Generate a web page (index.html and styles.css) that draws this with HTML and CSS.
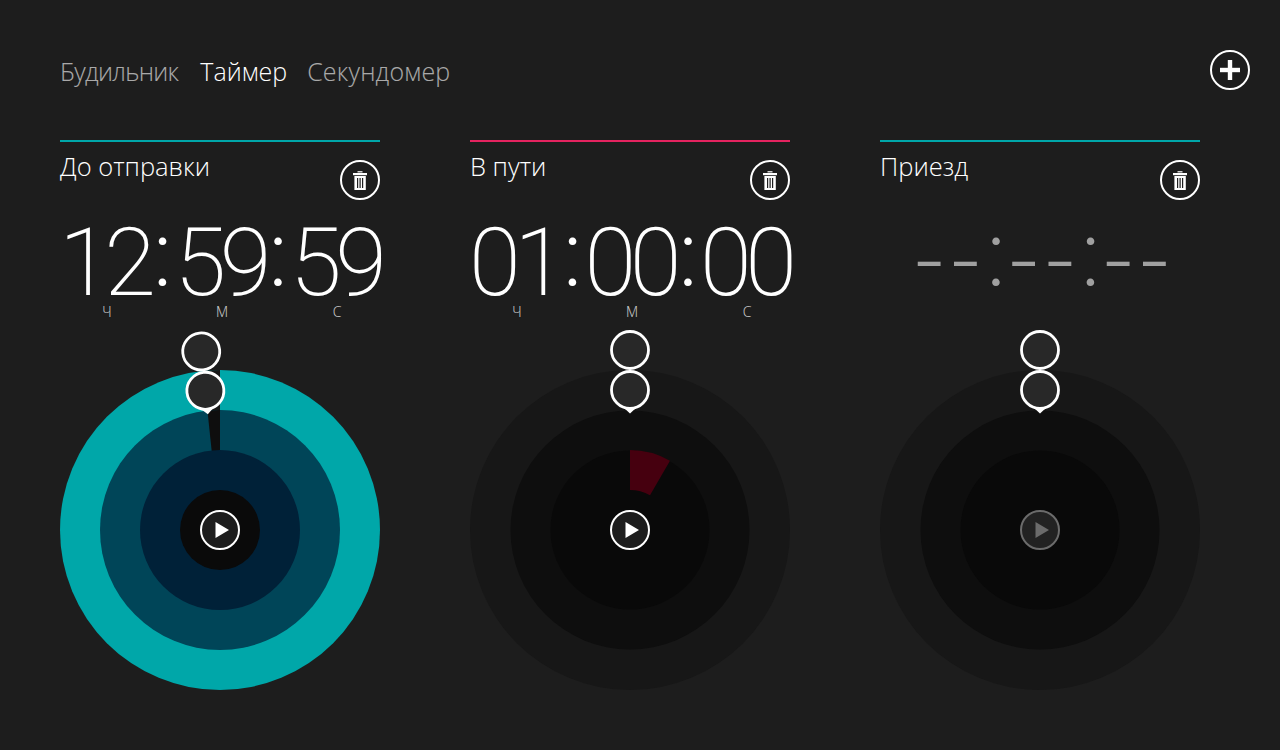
FILE: index.html
```html
<!DOCTYPE html>
<html lang="ru">
<head>
  <meta charset="UTF-8" />
  <title>Таймер</title>
  <link rel="stylesheet" href="styles.css">
</head>
<body>
  <div class="page">
    <header class="top">
      <nav class="tabs">
        <span>Будильник</span>
        <span class="active">Таймер</span>
        <span>Секундомер</span>
      </nav>
      <svg class="round-btn" viewBox="0 0 40 40">
        <circle cx="20" cy="20" r="19" fill="none" stroke="#fff" stroke-width="2"/>
        <rect x="10" y="17.8" width="20" height="4.4" fill="#fff"/>
        <rect x="17.8" y="10" width="4.4" height="20" fill="#fff"/>
      </svg>
    </header>

    <main class="timers">
      <section class="timer teal">
        <div class="head">
          <h2>До отправки</h2>
          <svg class="round-btn trash" viewBox="0 0 40 40">
            <circle cx="20" cy="20" r="19" fill="none" stroke="#fff" stroke-width="2"/>
            <rect x="17.5" y="11.2" width="5" height="1.2" fill="#fff"/>
            <rect x="13" y="13" width="14" height="2.2" fill="#fff"/>
            <path d="M14.4 16h11.4v14h-11.4z" fill="#fff"/>
            <path d="M17 18h1.2v10h-1.2zM19.5 18h1.2v10h-1.2zM22 18h1.2v10h-1.2z" fill="#1d1d1d"/>
          </svg>
        </div>
        <div class="time">12<i>:</i>59<i>:</i>59</div>
        <div class="units"><span>ч</span><span>м</span><span>с</span></div>
        <svg class="dial" viewBox="0 0 320 360">
          <circle cx="160" cy="200" r="160" fill="#00a7a9"/>
          <path d="M160 200L143.28 40.88A160 160 0 0 1 160 40Z" fill="#171717"/>
          <circle cx="160" cy="200" r="120" fill="#004558"/>
          <path d="M160 200L147.46 80.66A120 120 0 0 1 160 80Z" fill="#0e0e0e"/>
          <circle cx="160" cy="200" r="80" fill="#002138"/>
          <circle cx="160" cy="200" r="40" fill="#0a0a0a"/>
          <g transform="rotate(-6 160 200)">
            <circle class="knob" cx="160" cy="20.5" r="18.5"/>
            <path d="M153 77L160 83.5L167 77Z" fill="#fff"/>
            <circle class="knob" cx="160" cy="60" r="18.5"/>
          </g>
          <circle class="play-ring" cx="160" cy="200" r="19"/>
          <path class="play-arrow" d="M155.5 192L169 200L155.5 208Z"/>
        </svg>
      </section>

      <section class="timer pink">
        <div class="head">
          <h2>В пути</h2>
          <svg class="round-btn trash" viewBox="0 0 40 40">
            <circle cx="20" cy="20" r="19" fill="none" stroke="#fff" stroke-width="2"/>
            <rect x="17.5" y="11.2" width="5" height="1.2" fill="#fff"/>
            <rect x="13" y="13" width="14" height="2.2" fill="#fff"/>
            <path d="M14.4 16h11.4v14h-11.4z" fill="#fff"/>
            <path d="M17 18h1.2v10h-1.2zM19.5 18h1.2v10h-1.2zM22 18h1.2v10h-1.2z" fill="#1d1d1d"/>
          </svg>
        </div>
        <div class="time">01<i>:</i>00<i>:</i>00</div>
        <div class="units"><span>ч</span><span>м</span><span>с</span></div>
        <svg class="dial" viewBox="0 0 320 360">
          <circle cx="160" cy="200" r="160" fill="#171717"/>
          <circle cx="160" cy="200" r="119.5" fill="#0e0e0e"/>
          <circle cx="160" cy="200" r="79.5" fill="#090909"/>
          <path d="M160 120A80 80 0 0 1 200 130.72L180 165.36A40 40 0 0 0 160 160Z" fill="#46000f"/>
          <circle class="knob" cx="160" cy="20" r="18.5"/>
          <path d="M153 77L160 83.5L167 77Z" fill="#fff"/>
          <circle class="knob" cx="160" cy="60" r="18.5"/>
          <circle class="play-ring" cx="160" cy="200" r="19"/>
          <path class="play-arrow" d="M155.5 192L169 200L155.5 208Z"/>
        </svg>
      </section>

      <section class="timer teal">
        <div class="head">
          <h2>Приезд</h2>
          <svg class="round-btn trash" viewBox="0 0 40 40">
            <circle cx="20" cy="20" r="19" fill="none" stroke="#fff" stroke-width="2"/>
            <rect x="17.5" y="11.2" width="5" height="1.2" fill="#fff"/>
            <rect x="13" y="13" width="14" height="2.2" fill="#fff"/>
            <path d="M14.4 16h11.4v14h-11.4z" fill="#fff"/>
            <path d="M17 18h1.2v10h-1.2zM19.5 18h1.2v10h-1.2zM22 18h1.2v10h-1.2z" fill="#1d1d1d"/>
          </svg>
        </div>
        <div class="time empty"><b>--</b><i>:</i><b>--</b><i>:</i><b>--</b></div>
        <div class="units"></div>
        <svg class="dial" viewBox="0 0 320 360">
          <circle cx="160" cy="200" r="160" fill="#171717"/>
          <circle cx="160" cy="200" r="119.5" fill="#0e0e0e"/>
          <circle cx="160" cy="200" r="79.5" fill="#090909"/>
          <circle class="knob" cx="160" cy="20" r="18.5"/>
          <path d="M153 77L160 83.5L167 77Z" fill="#fff"/>
          <circle class="knob" cx="160" cy="60" r="18.5"/>
          <circle class="play-ring off" cx="160" cy="200" r="19"/>
          <path class="play-arrow off" d="M155.5 192L169 200L155.5 208Z"/>
        </svg>
      </section>
    </main>
  </div>
</body>
</html>
```

FILE: styles.css
```css
html, body {
  margin: 0;
  height: 100%;
  overflow: hidden;
}

body {
  background-color: #1d1d1d;
  color: #fff;
  font-family: 'Open Sans', sans-serif;
  font-weight: 300;
}

.page {
  padding: 50px 30px 0 60px;
}

.top {
  display: flex;
  justify-content: space-between;
  align-items: center;
  height: 40px;
  margin-bottom: 50px;
}

.tabs {
  display: flex;
  gap: 20px;
  margin-top: 2px;
  font-size: 25px;
  line-height: 44px;
  letter-spacing: 0.2px;
}

.tabs span {
  opacity: 0.62;
}

.tabs span:first-child {
  margin-right: 2px;
  letter-spacing: -0.7px;
}

.tabs .active {
  opacity: 1;
  letter-spacing: 0;
}

.round-btn {
  display: block;
  width: 40px;
  height: 40px;
}

.timers {
  display: flex;
  gap: 90px;
}

.timer {
  width: 320px;
  border-top: 2px solid #00a7a9;
}

.timer.pink {
  border-top-color: #e4235f;
}

.head {
  display: flex;
  justify-content: space-between;
  height: 58px;
}

.head h2 {
  margin: 7px 0 0;
  font-size: 25.5px;
  line-height: 34px;
  font-weight: 300;
}

.trash {
  margin-top: 18px;
}

.time {
  box-sizing: border-box;
  height: 100px;
  margin-left: -1px;
  padding-top: 13px;
  font-family: Roboto, sans-serif;
  font-size: 94px;
  font-weight: 200;
  line-height: 100px;
  letter-spacing: -6.5px;
  white-space: nowrap;
}

.time i {
  display: inline-block;
  box-sizing: border-box;
  width: 25px;
  padding-left: 1px;
  font-size: 91px;
  font-style: normal;
  font-weight: 300;
  line-height: 0;
  letter-spacing: 0;
  text-align: center;
  vertical-align: 9px;
}

.time.empty {
  margin-left: 0;
  padding-left: 34px;
  color: #a0a0a0;
}

.time.empty b {
  font-family: 'Open Sans', sans-serif;
  font-weight: 300;
  line-height: 0;
  letter-spacing: 6px;
  vertical-align: 6px;
}

.time.empty i {
  width: 22px;
  padding: 0 14px 0 0;
}

.units {
  display: flex;
  justify-content: center;
  height: 30px;
  padding: 2px 0 0 4px;
  box-sizing: border-box;
  font-size: 14px;
  line-height: 20px;
  text-transform: uppercase;
  opacity: 0.8;
}

.units span {
  flex: none;
  width: 115px;
  text-align: center;
}

.dial {
  display: block;
  width: 320px;
  height: 360px;
}

.knob {
  fill: #282828;
  stroke: #fff;
  stroke-width: 2.8;
}

.play-ring {
  fill: #1d1d1d;
  stroke: #fff;
  stroke-width: 2;
}

.play-arrow {
  fill: #fff;
}

.play-ring.off {
  stroke: #6b6b6b;
  fill: #222;
}

.play-arrow.off {
  fill: #6b6b6b;
}
```
